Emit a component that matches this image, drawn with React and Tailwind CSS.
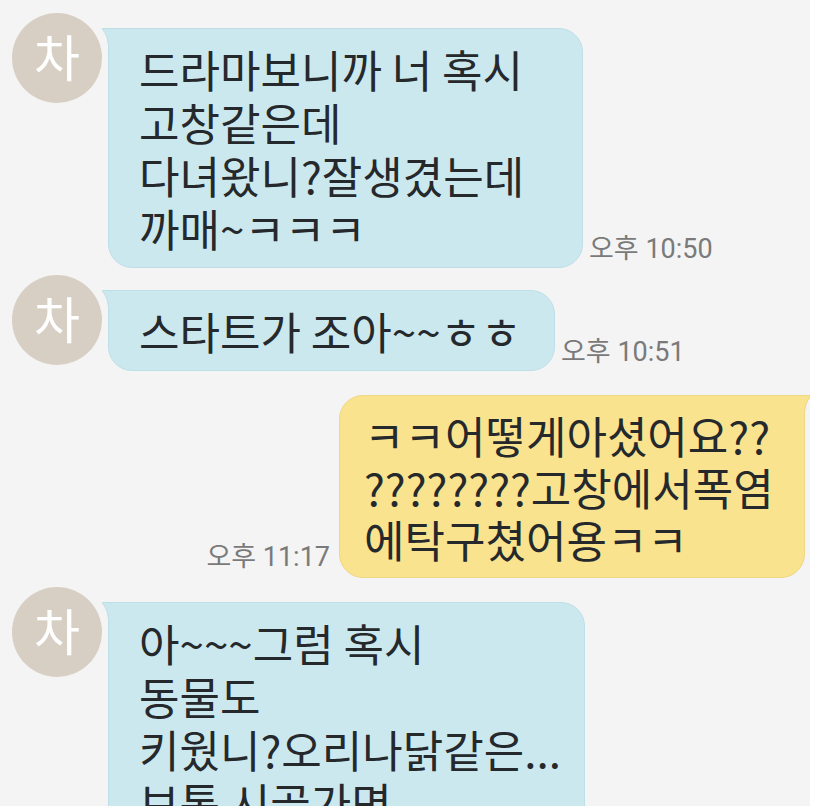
import React from "react";

const font = { fontFamily: '"Noto Sans CJK KR", "Noto Sans", sans-serif' };
const timeFont = { fontFamily: 'Roboto, "Noto Sans CJK KR", sans-serif' };

function Avatar() {
  return (
    <div className="w-[90px] h-[90px] rounded-full bg-[#d8cfc4] flex items-center justify-center shrink-0">
      <span className="text-white text-[50px] leading-none -mt-[6px]" style={font}>차</span>
    </div>
  );
}

function Time({ children }) {
  return (
    <span className="text-[27px] leading-none text-[#7a7a7a] whitespace-nowrap" style={timeFont}>
      {children}
    </span>
  );
}

function TailLeft({ color, stroke }) {
  return (
    <svg className="absolute left-[-7px] top-0" width="16" height="22" viewBox="0 0 16 22">
      <path d="M16 0 H2 Q0 0 1.5 1.5 Q7 7 8 22 H16 Z" fill={color} />
      <path d="M16 0.5 H2 Q0.5 0.5 1.8 1.8 Q7 7 8 22" fill="none" stroke={stroke} strokeWidth="1" />
    </svg>
  );
}

function TailRight({ color, stroke }) {
  return (
    <svg className="absolute right-[-7px] top-0" width="16" height="22" viewBox="0 0 16 22">
      <path d="M0 0 H14 Q16 0 14.5 1.5 Q9 7 8 22 H0 Z" fill={color} />
      <path d="M0 0.5 H14 Q15.5 0.5 14.2 1.8 Q9 7 8 22" fill="none" stroke={stroke} strokeWidth="1" />
    </svg>
  );
}

function LeftMsg({ lines, time, width, className = "" }) {
  return (
    <div className={`flex items-start ${className}`}>
      <div className="pl-[12px]">
        <Avatar />
      </div>
      <div className="flex items-end gap-[6px] ml-[6px] mt-[15px]">
        <div className="relative">
          <div
            className="relative bg-[#cce8ef] rounded-[24px] rounded-tl-[3px] border border-[#bfdfe8] pl-[30px] pt-[14px] pb-[12px] text-[44px] leading-[53px] text-[#25292c] whitespace-nowrap"
            style={{ ...font, width }}
          >
            {lines.map((l, i) => (
              <div key={i}>{l}</div>
            ))}
          </div>
          <TailLeft color="#cce8ef" stroke="#bfdfe8" />
        </div>
        {time && (
          <div className="pb-[4px]">
            <Time>{time}</Time>
          </div>
        )}
      </div>
    </div>
  );
}

export default function App() {
  return (
    <div className="w-[814px] h-[812px] bg-white">
      <div className="w-[810px] h-[806px] bg-[#f4f4f4] overflow-hidden">
        <LeftMsg
          className="pt-[13px]"
          width="475px"
          lines={["드라마보니까 너 혹시", "고창같은데", "다녀왔니?잘생겼는데", "까매~ㅋㅋㅋ"]}
          time="오후 10:50"
        />
        <LeftMsg
          className="mt-[7px]"
          width="447px"
          lines={["스타트가 조아~~ㅎㅎ"]}
          time="오후 10:51"
        />
        <div className="flex justify-end items-end gap-[9px] mt-[24px] pr-[5px]">
          <div className="pb-[6px]">
            <Time>오후 11:17</Time>
          </div>
          <div className="relative">
            <div
              className="relative w-[466px] bg-[#f9e38f] rounded-[24px] rounded-tr-[3px] border border-[#efd783] pl-[24px] pt-[13px] pb-[12px] text-[44px] leading-[52px] text-[#25292c] whitespace-nowrap"
              style={font}
            >
              <div>ㅋㅋ어떻게아셨어요??</div>
              <div>????????고창에서폭염</div>
              <div>에탁구쳤어용ㅋㅋ</div>
            </div>
            <TailRight color="#f9e38f" stroke="#efd783" />
          </div>
        </div>
        <LeftMsg
          className="mt-[9px]"
          width="477px"
          lines={["아~~~그럼 혹시", "동물도", "키웠니?오리나닭같은...", " 보통 시골가면", "있잖아"]}
        />
      </div>
    </div>
  );
}
